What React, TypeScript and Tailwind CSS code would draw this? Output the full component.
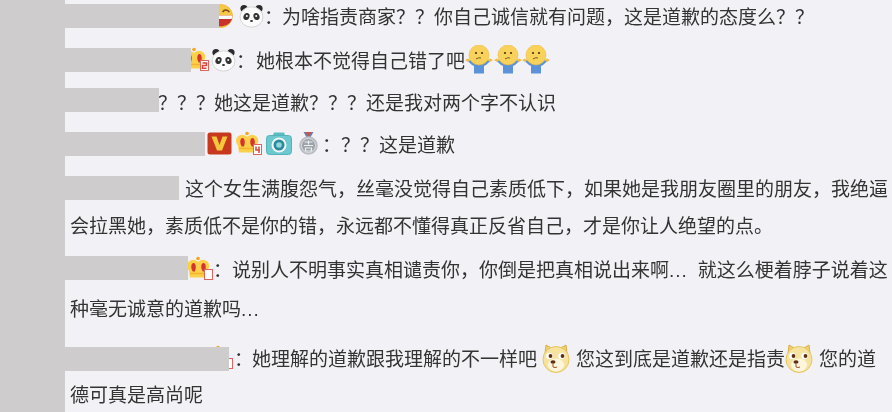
import React from "react";

function Panda({ ml = "ml-[3px]" }: { ml?: string }) {
  return (
    <svg width="25" height="24" viewBox="0 0 25 24" className={`inline-block align-[-4px] ${ml}`}>
      <circle cx="5" cy="4.500" r="3.600" fill="#2b2b2b" />
      <circle cx="20" cy="4.500" r="3.600" fill="#2b2b2b" />
      <ellipse cx="12.500" cy="13" rx="11.500" ry="10.200" fill="#fbfbfb" stroke="#d4d4d4" strokeWidth="1" />
      <ellipse cx="7.500" cy="12.500" rx="3" ry="3.600" fill="#333" transform="rotate(20 7.500 12.500)" />
      <ellipse cx="17.500" cy="12.500" rx="3" ry="3.600" fill="#333" transform="rotate(-20 17.500 12.500)" />
      <circle cx="7.800" cy="12" r="1" fill="#fff" />
      <circle cx="17.200" cy="12" r="1" fill="#fff" />
      <ellipse cx="12.500" cy="17" rx="1.500" ry="1" fill="#333" />
    </svg>
  );
}

function Laugh() {
  return (
    <svg width="24" height="24" viewBox="0 0 24 24" className="inline-block align-[-4px] -ml-[10px]">
      <circle cx="12" cy="12" r="11.500" fill="#f7c844" stroke="#e8a92f" strokeWidth="0.600" />
      <path d="M13.500 8q3-4 7 0" fill="none" stroke="#7a4a16" strokeWidth="1.500" />
      <path d="M2 11.500h21.500q-.5 10-11 11Q3 22 2 11.500z" fill="#c9332b" />
      <path d="M3 11.500h20.500q0 2-1 3.500H4q-1-1.500-1-3.500z" fill="#fff" />
    </svg>
  );
}

function Crown({ n }: { n?: string }) {
  return (
    <svg width="26" height="24" viewBox="0 0 26 24" className="inline-block align-[-3px]">
      <circle cx="11" cy="2.500" r="1.800" fill="#f5a623" />
      <circle cx="6.200" cy="10" r="6.200" fill="#fbd04b" />
      <circle cx="16" cy="10" r="6.200" fill="#fbd04b" />
      <path d="M1.500 12h19l-1.500 9.500H3z" fill="#fbd04b" />
      <path d="M5.800 15.500C3.500 12.500 3.800 7 6.500 7c2.300 0 3 4.500 1.300 8.500z" fill="#d8322c" />
      <path d="M15.800 15.500C13.500 12.500 13.800 7 16.500 7c2.300 0 3 4.500 1.300 8.500z" fill="#d8322c" />
      <path d="M3 17.500h16.500" stroke="#f6b52f" strokeWidth="1.500" />
      <rect x="17.500" y="13.500" width="8" height="10" fill="#fff" stroke="#e0645c" strokeWidth="1" />
      {n ? (
        <path
          d={n === "2" ? "M19.500 16h4v2.500h-4v2.700h4" : "M20 15.500v3.500h4M23 15.500v6.500"}
          fill="none"
          stroke="#d8453d"
          strokeWidth="1.500"
        />
      ) : null}
    </svg>
  );
}

function VBadge() {
  return (
    <svg width="25" height="23" viewBox="0 0 25 23" className="inline-block align-[-3px] ml-[2px] mr-[4px]">
      <rect x="0.500" y="0.500" width="24" height="22" rx="2.500" fill="#c8381f" />
      <path d="M4.500 4.500h5l3 8.500 3-8.500h5L15 18.500h-5z" fill="#f6c63c" />
    </svg>
  );
}

function Camera() {
  return (
    <svg width="26" height="23" viewBox="0 0 26 23" className="inline-block align-[-3px] ml-[4px] mr-[7px]">
      <path d="M6.500 4l1.500-3.500h10L19.500 4z" fill="#5bbdc3" />
      <rect x="0.500" y="3.500" width="25" height="19" rx="3" fill="#6cc9cf" stroke="#55b2b8" />
      <circle cx="13" cy="13" r="7.500" fill="#f2f7f7" />
      <circle cx="13" cy="13" r="5.500" fill="#2d8a9c" />
      <circle cx="13" cy="13" r="2.800" fill="#8fd6dd" />
    </svg>
  );
}

function Medal() {
  return (
    <svg width="19" height="23" viewBox="0 0 19 23" className="inline-block align-[-3px] mr-[4px]">
      <path d="M4.500 0l4 7h2l4-7h-3l-2 4-2-4z" fill="#6e7fa8" />
      <path d="M6.500 0l3 5 3-5z" fill="#c5544c" />
      <circle cx="9.500" cy="13.500" r="9.300" fill="#b9bec4" />
      <circle cx="9.500" cy="13.500" r="7" fill="#9da3aa" stroke="#d9dcdf" />
      <path d="M5.500 10h8M9.500 8.500v4M5 13.500h9M6.500 16h6v3h-6z" stroke="#eceef0" strokeWidth="1.200" fill="none" />
    </svg>
  );
}

function Shrug() {
  return (
    <svg width="28" height="29" viewBox="0 0 28 29" className="inline-block align-[-6px] mr-[0.5px]">
      <path d="M2 15.500l3-.5 4 2.500h10l4-2.500 3 .5-5 4.500-2 1v7.500H9V21l-2-1z" fill="#5b92d8" />
      <path d="M0 15l3-1.500L5.500 15 3 17zM28 15l-3-1.500L22.500 15l2.500 2z" fill="#eec04a" />
      <circle cx="14" cy="10" r="10" fill="#f9d25b" stroke="#eeb93c" strokeWidth="0.600" />
      <circle cx="11" cy="8" r="1.100" fill="#4a3414" />
      <circle cx="17" cy="8" r="1.100" fill="#4a3414" />
      <path d="M11 14q3-2 5-1" fill="none" stroke="#7d5a1c" strokeWidth="1" />
    </svg>
  );
}

function Doge() {
  return (
    <svg width="28" height="29" viewBox="0 0 28 29" className="inline-block align-[-7px]">
      <path d="M3 9L4 1l7 4zM25 9L24 1l-7 4z" fill="#f1d070" stroke="#d9ae47" />
      <circle cx="14" cy="15.500" r="13" fill="#f6e3a0" stroke="#e6c45c" />
      <ellipse cx="14" cy="21" rx="8" ry="6.500" fill="#fdf6dc" />
      <circle cx="7.500" cy="12" r="3.200" fill="#fff" />
      <circle cx="19.500" cy="12" r="3.200" fill="#fff" />
      <circle cx="8.500" cy="12" r="1.900" fill="#5e2f14" />
      <circle cx="20.500" cy="12" r="1.900" fill="#5e2f14" />
      <ellipse cx="11" cy="18" rx="2.500" ry="1.800" fill="#5e2f14" />
      <path d="M11 20v3q2 1 4 0" fill="none" stroke="#a0522d" strokeWidth="1" />
    </svg>
  );
}

function Name({ w, up = "align-[-4px]" }: { w: string; up?: string }) {
  return <span className={`relative z-10 inline-block h-6 -ml-[5px] bg-[#cecccc] ${up} ${w}`} />;
}

export default function App() {
  return (
    <div className="flex h-[412px] w-[892px] overflow-hidden bg-[#f2f2f6]">
      <div className="w-[65px] shrink-0 bg-[#cecccc]" />
      <div
        className="-mt-[3px] w-[827px] pl-[5px] text-[19px] leading-[38px] text-[#333333] blur-[0.35px]"
        style={{ fontFamily: '"Noto Sans CJK SC", "Noto Sans", sans-serif' }}
      >
        <p className="whitespace-nowrap">
          <Name w="w-[154px]" />
          <Laugh />
          <span className="ml-[3px]" />
          <Panda />
          <span className="-mr-px">：</span>为啥指责商家？？你自己诚信就有问题，这是道歉的态度么？？
        </p>
        <p className="mt-[6px] whitespace-nowrap">
          <Name w="w-[126px]" />
          <span className="-ml-[8px]">
            <Crown n="2" />
          </span>
          <Panda ml="ml-[2px]" />
          <span className="mr-[1px]">：</span>她根本不觉得自己错了吧
          <Shrug />
          <Shrug />
          <Shrug />
        </p>
        <p className="mt-[4px] whitespace-nowrap">
          <Name w="w-[94px]" up="align-[-2px]" />
          <span className="-ml-[1px]" />？？？<span className="-ml-[1px]" />她这是道歉？？？还是我对两个字不认识
        </p>
        <p className="mt-[4px] whitespace-nowrap">
          <Name w="w-[140px]" />
          <VBadge />
          <Crown n="4" />
          <Camera />
          <Medal />：？？这是道歉
        </p>
        <p className="mt-[6px] leading-[37px]">
          <Name w="w-[114px]" />
          <span className="ml-[6px]" />
          这个女生满腹怨气，丝毫没觉得自己素质低下，如果她是我朋友圈里的朋友，我绝逼
          <br />
          会拉黑她，素质低不是你的错，永远都不懂得真正反省自己，才是你让人绝望的点。
        </p>
        <p className="mt-[7px] leading-[37px]">
          <Name w="w-[123px]" up="align-[-3px]" />
          <span className="-ml-px" />
          <Crown />：说别人不明事实真相谴责你，你倒是把真相说出来啊
          <span style={{ fontFamily: '"Liberation Sans", sans-serif' }} className="mr-[5px] tracking-[1px]">
            ...
          </span>
          <span className="ml-[5px]" />就这么梗着脖子说着这
          <br />
          种毫无诚意的道歉吗
          <span style={{ fontFamily: '"Liberation Sans", sans-serif' }} className="tracking-[1px]">
            ...
          </span>
        </p>
        <p className="mt-[12px] leading-[36px]">
          <Name w="w-[164px]" up="align-[-5px]" />
          <span className="-ml-[22px]">
            <Crown />
          </span>
          <span className="ml-[1px]" />：<span className="-ml-px" />她理解的道歉跟我理解的不一样吧
          <span className="ml-[5px]" />
          <Doge />
          <span className="ml-[6px]" />
          您这到底是道歉还是指责
          <Doge />
          <span className="ml-[6px]" />
          您的道
          <br />
          德可真是高尚呢
        </p>
      </div>
    </div>
  );
}
